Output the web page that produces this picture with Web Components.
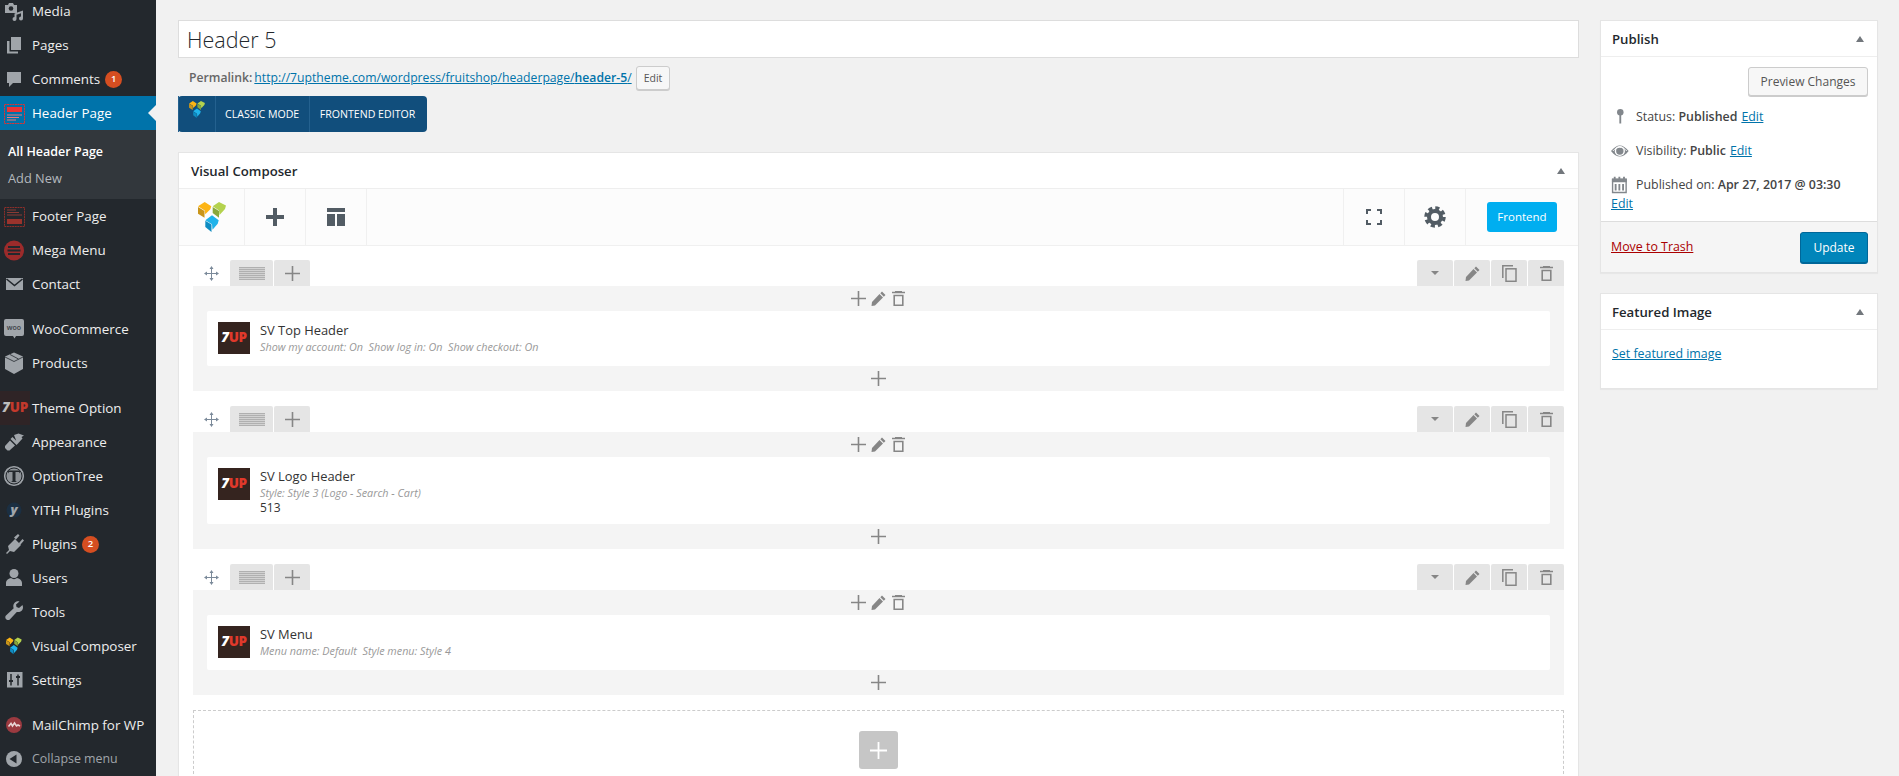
<!DOCTYPE html>
<html><head><meta charset="utf-8">
<style>
html,body{margin:0;padding:0;height:776px;overflow:hidden;background:#f1f1f1;font:13px/1.4 "Open Sans","Noto Sans",sans-serif;color:#444}
</style></head>
<body>
<wp-app>
  <wp-sidebar slot="side">
    <wp-menu-item icon="media" style="margin-top:-6px">Media</wp-menu-item>
    <wp-menu-item icon="pages">Pages</wp-menu-item>
    <wp-menu-item icon="comments" badge="1">Comments</wp-menu-item>
    <wp-menu-item icon="header" current>Header Page</wp-menu-item>
    <wp-submenu>
      <wp-sub-item current>All Header Page</wp-sub-item>
      <wp-sub-item>Add New</wp-sub-item>
    </wp-submenu>
    <wp-menu-item icon="footer">Footer Page</wp-menu-item>
    <wp-menu-item icon="mega">Mega Menu</wp-menu-item>
    <wp-menu-item icon="contact">Contact</wp-menu-item>
    <wp-menu-sep></wp-menu-sep>
    <wp-menu-item icon="woo">WooCommerce</wp-menu-item>
    <wp-menu-item icon="products">Products</wp-menu-item>
    <wp-menu-sep></wp-menu-sep>
    <wp-menu-item icon="seven">Theme Option</wp-menu-item>
    <wp-menu-item icon="brush">Appearance</wp-menu-item>
    <wp-menu-item icon="tree">OptionTree</wp-menu-item>
    <wp-menu-item icon="yith">YITH Plugins</wp-menu-item>
    <wp-menu-item icon="plug" badge="2">Plugins</wp-menu-item>
    <wp-menu-item icon="user">Users</wp-menu-item>
    <wp-menu-item icon="wrench">Tools</wp-menu-item>
    <wp-menu-item icon="vc">Visual Composer</wp-menu-item>
    <wp-menu-item icon="settings">Settings</wp-menu-item>
    <wp-menu-sep></wp-menu-sep>
    <wp-menu-item icon="chimp">MailChimp for WP</wp-menu-item>
    <wp-menu-item icon="collapse" muted>Collapse menu</wp-menu-item>
  </wp-sidebar>

  <wp-editor slot="main">
    <wp-title-field>Header 5</wp-title-field>
    <wp-permalink></wp-permalink>
    <vc-switch></vc-switch>
    <vc-panel>
      <vc-row>
        <vc-element title="SV Top Header" sub="Show my account: On&#160; Show log in: On&#160; Show checkout: On"></vc-element>
      </vc-row>
      <vc-row>
        <vc-element title="SV Logo Header" sub="Style: Style 3 (Logo - Search - Cart)" extra="513"></vc-element>
      </vc-row>
      <vc-row>
        <vc-element title="SV Menu" sub="Menu name: Default&#160; Style menu: Style 4"></vc-element>
      </vc-row>
      <vc-add-zone></vc-add-zone>
    </vc-panel>
  </wp-editor>

  <wp-rail slot="rail">
    <wp-metabox heading="Publish"><wp-publish></wp-publish></wp-metabox>
    <wp-metabox heading="Featured Image"><wp-featured></wp-featured></wp-metabox>
  </wp-rail>
</wp-app>

<script>
const G='#a0a5aa', D='#23282d';
const vcLogo=`<g>
<path fill="#fdb515" d="M0 4.300L6.700 0l6.600 4.300-1 3-5 5-.6-3.800z"/><path fill="#c9951a" d="M0 5l6.500 4v6.700L0 11.700z"/>
<path fill="#b4d24e" d="M14.700 4.300L21 0l7 3.500-1 3.500-5.500 6-.5-4.500z"/><path fill="#8aa83b" d="M14.700 5l6.300 4v6.700L14.700 11z"/>
<path fill="#1fb3ea" d="M7.300 18.300l6.700-5 6.700 5-1 3.500-5.200 6-.5-5.500z"/><path fill="#0e8cc2" d="M7.300 18.800l6.200 3.600V30l-6.200-5z"/></g>`;
const ICONS={
 media:`<path fill="${G}" d="M5 8h3l1-2h4l1 2h3v8H5z"/><circle cx="11" cy="11.500" r="2.300" fill="${D}"/><path fill="${G}" d="M14.500 16.500l8.500-3v8a2 2 0 1 1-2-2v-3.300l-4.500 1.500V22a2 2 0 1 1-2-2z"/>`,
 pages:`<rect x="11" y="6" width="10" height="13" fill="${G}"/><path fill="${G}" d="M7 10h2.500v10.500H18v2H7z"/>`,
 comments:`<path fill="${G}" d="M7 7h14v11h-8l-4 4v-4H7z"/>`,
 header:`<rect x="4.500" y="5.500" width="20" height="19" fill="none" stroke="#d33" stroke-dasharray="2 .6"/><rect x="7" y="8" width="15" height="5" fill="#e33"/><path stroke="#e77" stroke-width="1" d="M7 16h15M7 18.500h12M7 21h9"/>`,
 footer:`<rect x="4.500" y="5.500" width="20" height="19" fill="none" stroke="#8c2f2a" stroke-dasharray="2 .6"/><rect x="7" y="17" width="15" height="5" fill="#9a332c"/><path stroke="#8c3a34" stroke-width="1" d="M7 8h9M7 10.500h12M7 13h15"/>`,
 mega:`<circle cx="14" cy="14.500" r="10" fill="#9c2b2b"/><path stroke="${D}" stroke-width="1.800" d="M8 11h12M7.500 14.500h13M8 18h12"/>`,
 contact:`<rect x="6" y="8" width="17" height="12" fill="${G}"/><path fill="none" stroke="${D}" stroke-width="1.600" d="M6.500 9l8 6.500 8-6.500"/>`,
 woo:`<path fill="${G}" d="M6 4h16a2 2 0 0 1 2 2v13a2 2 0 0 1-2 2h-6l-1.500 2.500L13 21H6a2 2 0 0 1-2-2V6a2 2 0 0 1 2-2z"/><text x="14" y="15" font-size="7" font-weight="600" text-anchor="middle" fill="#3a4046" font-family="Open Sans">woo</text>`,
 products:`<path fill="${G}" d="M14 3.500l9 4v12.500l-9 5-9-5V7.500z"/><path fill="none" stroke="${D}" stroke-width=".8" d="M5 8l9 4.500L23 8M10 5.500l8.500 4.500"/>`,
 brush:`<path fill="${G}" d="M14 7l4.500-1.500L24 7.500l-2.500 1.500 1 1.500-5 5.500zM12.500 9l6 6-2 2-6-6zM10 12.500l5 5-5.500 5H7.500L5 20v-2z"/>`,
 tree:`<circle cx="14" cy="14" r="9.500" fill="#8d9297" stroke="${G}" stroke-width="1.200"/><circle cx="14" cy="14" r="8" fill="none" stroke="${D}" stroke-width="1"/><path fill="${D}" d="M8 8.500h12v3l-1-1.500h-3.500v9l1.500 1h-6l1.500-1v-9H9l-1 1.500z"/>`,
 yith:`<circle cx="14" cy="14" r="7.500" fill="#1b2f42"/><text x="14" y="17.500" font-size="13" font-style="italic" font-weight="800" text-anchor="middle" fill="${G}" font-family="Open Sans">y</text>`,
 plug:`<path fill="${G}" d="M6 23l3-3-1-4 7-7 6 6-7 7-4-1-3 3zM14 7.500l4-3.500 1.500 1.500-3.500 4zM19 13l3.500-4 1.500 1.500-3.500 4z"/>`,
 user:`<circle cx="14" cy="9.500" r="4.500" fill="${G}"/><path fill="${G}" d="M6 22v-3c0-3 3-4.500 5-5 1.500 1.500 4.500 1.500 6 0 2 .5 5 2 5 5v3z"/>`,
 wrench:`<path fill="${G}" d="M22.500 7l-3.500 3-2.500-1-.5-2.500 3.500-3c-3-.8-6 1.500-6.200 4.500 0 1 .1 1.500.4 2.200L6 17.500c-1.500 1.500-.5 5 3 4.500l.8-.6 7-7.500c3 1 6.500-1.500 6.200-5z"/>`,
 vc:`<g transform="translate(6 5.500) scale(.56)">${vcLogo}</g>`,
 settings:`<rect x="7" y="6" width="15.500" height="15.500" fill="${G}"/><path stroke="${D}" stroke-width="1.500" d="M11 8v11.500M18 8.500v11"/><path fill="${D}" d="M9 14h4v2H9zM16 10h4v2h-4z"/>`,
 chimp:`<circle cx="14" cy="14" r="8" fill="#9b3a40"/><path fill="none" stroke="#e8d5d5" stroke-width="1.600" d="M8.500 15.500l2.500-3 1.500 2.500 2-3 2 3 1.500-1 2 1"/>`,
 collapse:`<circle cx="14" cy="14" r="8" fill="${G}"/><path fill="${D}" d="M16.500 9.500v9l-7-4.500z"/>`
};
function tpl(html){const t=document.createElement('template');t.innerHTML=html;return t}
function def(name,html){
  const t=tpl(html);
  customElements.define(name,class extends HTMLElement{
    constructor(){super();this.attachShadow({mode:'open'}).appendChild(t.content.cloneNode(true));}
  });
}
customElements.define('wp-icon',class extends HTMLElement{
  constructor(){super();this.attachShadow({mode:'open'})}
  connectedCallback(){
    const n=this.getAttribute('name');
    if(n==='seven'){
      this.shadowRoot.innerHTML=`<style>:host{display:block;width:30px;height:34px}
      div{width:30px;height:34px;background:#2f2426;display:flex;align-items:center;justify-content:center;font:italic 800 13.500px/1 "Open Sans",sans-serif;color:#bdbdbd;letter-spacing:-.2px}
      b{color:#c4392c;font-style:normal;font-weight:800}</style><div>7<b>UP</b></div>`;return;
    }
    this.shadowRoot.innerHTML=`<style>:host{display:block;width:28px;height:28px}svg{display:block}</style><svg width="28" height="28" viewBox="0 0 28 28">${ICONS[n]}</svg>`;
  }
});
def('wp-app',`<style>:host{display:flex;height:776px;overflow:hidden;align-items:stretch}
 .s{flex:0 0 156px;background:#23282d;overflow:hidden}
 .m{flex:0 0 1401px;margin-left:22px;padding-top:20px;min-width:0}
 .r{flex:0 0 278px;margin-left:21px;padding-top:20px}</style>
 <div class="s"><slot name="side"></slot></div><div class="m"><slot name="main"></slot></div><div class="r"><slot name="rail"></slot></div>`);
def('wp-sidebar',`<style>:host{display:block}</style><slot></slot>`);
def('wp-menu-sep',`<style>:host{display:block;height:11px}</style>`);
customElements.define('wp-menu-item',class extends HTMLElement{
  constructor(){super();this.attachShadow({mode:'open'})}
  connectedCallback(){
    const cur=this.hasAttribute('current'),muted=this.hasAttribute('muted'),b=this.getAttribute('badge'),ic=this.getAttribute('icon');
    this.shadowRoot.innerHTML=`<style>
    :host{display:flex;align-items:center;height:34px;position:relative;background:${cur?'#0073aa':'transparent'};color:${muted?'#a0a5aa':cur?'#fff':'#eee'};font:${muted?'12.400px':'13.400px'}/18px "Open Sans",sans-serif}
    .i{flex:0 0 ${ic==='seven'?'30px':'28px'};margin-right:${ic==='seven'?'2px':'4px'}}
    .b{display:inline-flex;align-items:center;justify-content:center;width:17px;height:17px;border-radius:50%;background:#d54e21;color:#fff;font:600 9.500px/1 "Open Sans",sans-serif;margin-left:5px}
    .a{position:absolute;right:0;top:9px;border:8px solid transparent;border-right-color:#f1f1f1;border-left:0}
    </style><wp-icon class="i" name="${ic}"></wp-icon><span><slot></slot></span>${b?`<span class="b">${b}</span>`:''}${cur?'<i class="a"></i>':''}`;
  }
});
def('wp-submenu',`<style>:host{display:block;background:#32373c;padding:8px 0 7px}</style><slot></slot>`);
customElements.define('wp-sub-item',class extends HTMLElement{
  constructor(){super();this.attachShadow({mode:'open'})}
  connectedCallback(){const c=this.hasAttribute('current');
    this.shadowRoot.innerHTML=`<style>:host{display:block;height:27px;padding-left:8px;font:${c?'600 12.500px':'400 12.800px'}/27px "Open Sans",sans-serif;color:${c?'#fff':'#b4b9be'}}</style><slot></slot>`}
});
def('wp-editor',`<style>:host{display:block}</style><slot></slot>`);
def('wp-title-field',`<style>:host{display:block;height:36px;background:#fff;border:1px solid #ddd;padding:0 8px;font:300 21.500px/38px "Open Sans",sans-serif;color:#23282d}</style><slot></slot>`);
def('wp-permalink',`<style>:host{display:flex;align-items:center;height:24px;margin-top:8px;padding-left:11px;color:#666;font:12.200px/24px "Open Sans",sans-serif}
 b{font-weight:600;margin-right:2px}a{color:#0073aa}a b{margin:0}
 span{display:block;box-sizing:border-box;height:24px;margin-left:4px;padding:0 7px;border:1px solid #ccc;border-radius:3px;background:#f7f7f7;box-shadow:0 1px 0 #ccc;font-size:10.500px;line-height:22px;color:#555}</style>
 <b>Permalink:</b><a href="#">http://7uptheme.com/wordpress/fruitshop/headerpage/<b>header-5</b>/</a><span>Edit</span>`);
def('vc-switch',`<style>:host{display:flex;width:249px;height:36px;margin-top:6px;background:#114e7c;border-radius:4px;color:#fff;font:10.600px/36px "Open Sans",sans-serif}
 .c{padding:0 10px 0 9.500px;border-left:1px solid #24618f;white-space:nowrap}.c:first-child{border:0;padding:0;width:36px;display:flex;align-items:center;justify-content:center}</style>
 <div class="c"><svg width="16" height="17" viewBox="0 0 28 30">${vcLogo}</svg></div><div class="c">CLASSIC MODE</div><div class="c">FRONTEND EDITOR</div>`);
const tri=`<i style="display:block;width:0;height:0;border:4px solid transparent;border-top:0;border-bottom:6px solid #72777c"></i>`;
def('vc-panel',`<style>:host{display:block;box-sizing:border-box;margin-top:20px;height:640px;background:#fff;border:1px solid #e5e5e5;box-shadow:0 1px 1px rgba(0,0,0,.04)}
 .h{display:flex;justify-content:space-between;align-items:center;height:34px;padding:1px 13px 0 12px;border-bottom:1px solid #eee;font:600 13.200px/34px "Open Sans",sans-serif;color:#23282d}
 .t{display:flex;height:56px;background:#fcfcfc;border-bottom:1px solid #f0f0f0;align-items:stretch}
 .c{flex:0 0 61px;box-sizing:border-box;border-right:1px solid #f0f0f0;display:flex;align-items:center;justify-content:center}
 .l{flex:0 0 66px}.sp{flex:1;border-right:1px solid #f0f0f0}
 .f{flex:0 0 112px;display:flex;align-items:center;justify-content:center}
 .f span{display:block;width:70px;height:30px;background:#00aef0;border-radius:3px;color:#fff;font:400 11.500px/30px "Open Sans",sans-serif;text-align:center}
 .b{padding:14px 14px 0 14px;display:flex;flex-direction:column;gap:15px}</style>
 <div class="h"><span>Visual Composer</span>${tri}</div>
 <div class="t"><div class="c l"><svg width="28" height="30" viewBox="0 0 28 30">${vcLogo}</svg></div>
  <div class="c"><svg width="18" height="18" viewBox="0 0 18 18"><path fill="#525c64" d="M7 0h4v7h7v4h-7v7H7v-7H0V7h7z"/></svg></div>
  <div class="c"><svg width="18" height="18" viewBox="0 0 18 18"><path fill="#525c64" d="M0 0h18v4H0zM0 6h8v12H0zM10 6h8v12h-8z"/></svg></div>
  <div class="sp"></div>
  <div class="c"><svg width="16" height="16" viewBox="0 0 16 16" fill="none" stroke="#525c64" stroke-width="2"><path d="M1 5V1h4M11 1h4v4M15 11v4h-4M5 15H1v-4"/></svg></div>
  <div class="c"><svg width="22" height="22" viewBox="0 0 22 22"><circle cx="11" cy="11" r="6" fill="none" stroke="#525c64" stroke-width="4"/><circle cx="11" cy="11" r="9" fill="none" stroke="#525c64" stroke-width="3.500" stroke-dasharray="4.070 3"/></svg></div>
  <div class="f"><span>Frontend</span></div></div>
 <div class="b"><slot></slot></div>`);
const plus=(s=15,c='#868686')=>`<svg width="${s}" height="${s}" viewBox="0 0 15 15"><path fill="${c}" d="M6.700 0h1.600v6.700H15v1.600H8.300V15H6.700V8.300H0V6.700h6.700z"/></svg>`;
const pencil=`<svg width="15" height="15" viewBox="0 0 15 15"><path fill="#868686" d="M11 .5l3.500 3.500-1.700 1.700-3.500-3.500zM8.500 3l3.500 3.500L4 14.500l-3.500.5L1 11z"/></svg>`;
const trash=`<svg width="13" height="15" viewBox="0 0 13 15"><path fill="none" stroke="#868686" stroke-width="1.600" d="M0 1.500h13M2.200 4.500h8.600v9.700H2.200z"/><path fill="#868686" d="M3 0h7v1.500H3z"/></svg>`;
const copy=`<svg width="15" height="17" viewBox="0 0 15 17" fill="none" stroke="#868686" stroke-width="1.500"><path d="M11 .8H.8V13"/><rect x="4" y="3.800" width="10" height="12.500"/></svg>`;
const move=`<svg width="15" height="15" viewBox="0 0 15 15"><path fill="#7b8a9a" d="M7 3h1v4h4V5.500l3 2-3 2V8H8v4h1.500l-2 3-2-3H7V8H3v1.500l-3-2 3-2V7h4V3H5.500l2-3 2 3z"/></svg>`;
def('vc-row',`<style>:host{display:block}
 .top{display:flex;height:26px;gap:1px}
 .tab{box-sizing:border-box;background:#e5e5e5;border-radius:2px 2px 0 0;display:flex;align-items:center;justify-content:center;width:36px}
 .m{background:transparent}.lines{width:43px}
 .lines i{display:block;width:26px;height:13px;background:repeating-linear-gradient(#b0b0b0 0 1px,#d2d2d2 1px 2px)}
 .sp{flex:1}
 .caret{width:0;height:0;border:4px solid transparent;border-bottom:0;border-top:4px solid #868686}
 .body{background:#f4f4f4;padding:0 14px}
 .strip{height:25px;display:flex;align-items:center;justify-content:center;gap:5px;padding-right:1px}
 .strip.a{padding-right:2px;gap:5.500px}
 </style>
 <div class="top"><div class="tab m">${move}</div><div class="tab lines"><i></i></div><div class="tab">${plus()}</div><div class="sp"></div>
 <div class="tab"><i class="caret"></i></div><div class="tab">${pencil}</div><div class="tab">${copy}</div><div class="tab">${trash}</div></div>
 <div class="body"><div class="strip a">${plus()}${pencil}${trash}</div><slot></slot><div class="strip">${plus()}</div></div>`);
customElements.define('vc-element',class extends HTMLElement{
  constructor(){super();this.attachShadow({mode:'open'})}
  connectedCallback(){
    const x=this.getAttribute('extra');
    this.shadowRoot.innerHTML=`<style>:host{display:flex;background:#fff;border-radius:2px;padding:11px 11px 9px;min-height:35px;gap:10px;font-family:"Open Sans",sans-serif}
    .logo{flex:0 0 32px;height:32px;background:#35241f;display:flex;align-items:center;justify-content:center;font:italic 800 13.500px/1 "Open Sans",sans-serif;color:#fff;letter-spacing:-.3px}
    .logo b{font-style:normal;font-weight:800;color:#e0392b}
    .t{font-size:12.900px;line-height:17px;color:#333}.s{font-size:10.800px;line-height:15px;font-style:italic;color:#999}.x{font-size:12px;line-height:15px;color:#333}</style>
    <div class="logo">7<b>UP</b></div><div><div class="t">${this.getAttribute('title')}</div><div class="s">${this.getAttribute('sub')}</div>${x?`<div class="x">${x}</div>`:''}</div>`;
  }
});
def('vc-add-zone',`<style>:host{display:flex;justify-content:center;box-sizing:border-box;height:120px;border:1px dashed #ccc;padding-top:20px}
 div{width:39px;height:38px;margin-right:1px;background:#c6c6c6;border-radius:3px;display:flex;align-items:center;justify-content:center}</style><div>${plus(17,'#fff')}</div>`);
def('wp-rail',`<style>:host{display:flex;flex-direction:column;gap:20px}</style><slot></slot>`);
customElements.define('wp-metabox',class extends HTMLElement{
  constructor(){super();this.attachShadow({mode:'open'})}
  connectedCallback(){
    this.shadowRoot.innerHTML=`<style>:host{display:block;background:#fff;border:1px solid #e5e5e5;box-shadow:0 1px 1px rgba(0,0,0,.04)}
    .h{display:flex;justify-content:space-between;align-items:center;height:34px;padding:1px 13px 0 11px;border-bottom:1px solid #eee;font:600 13.200px/34px "Open Sans",sans-serif;color:#23282d}</style>
    <div class="h"><span>${this.getAttribute('heading')}</span>${tri}</div><slot></slot>`;
  }
});
const pin=`<svg width="28" height="20" viewBox="0 0 28 20"><circle cx="10" cy="5" r="3.500" fill="#82878c"/><path stroke="#82878c" stroke-width="2" d="M10 7v10"/></svg>`;
const eye=`<svg width="28" height="20" viewBox="0 0 28 20"><path fill="#82878c" d="M0 10c3-4 6.500-6 9.500-6s6.500 2 9.500 6c-3 4-6.500 6-9.500 6S3 14 0 10z"/><circle cx="9.500" cy="10" r="5.500" fill="#fff"/><circle cx="9.500" cy="10" r="4" fill="#82878c"/><path d="M2 10c2-2.500 5-4 7.500-4s5.500 1.500 7.500 4" fill="none" stroke="#fff"/></svg>`;
const cal=`<svg width="28" height="20" viewBox="0 0 28 20"><path fill="none" stroke="#82878c" stroke-width="1.500" d="M1.700 4h14.600v14H1.700z"/><path fill="#82878c" d="M1 3h16v4H1zM3 1h2v4H3zM8 1h2v4H8zM13 1h2v4h-2zM4 9h2v7H4zM8 9h2v7H8zM12 9h2v7h-2z"/></svg>`;
def('wp-publish',`<style>:host{display:block;font:12.400px/20px "Open Sans",sans-serif;color:#444}
 a{color:#0073aa}b{font-weight:600}
 .p{display:flex;justify-content:flex-end;padding:10px 9px 0 0}
 .pv{box-sizing:border-box;width:120px;height:29px;border:1px solid #ccc;border-radius:3px;background:#f7f7f7;box-shadow:0 1px 0 #ccc;color:#555;font-size:12px;line-height:27px;text-align:center}
 .rows{padding:4px 9px 0 10px}
 .row{display:flex;align-items:center;height:34px}.row svg{flex:0 0 26px;width:26px;margin-right:-1px}
 .e{padding:0 0 7px 10px;margin-top:-8px}
 .rows a{margin-left:4px}
 .foot{display:flex;justify-content:space-between;align-items:center;height:50px;padding:0 9px 0 10px;background:#f5f5f5;border-top:1px solid #ddd}
 .foot a{color:#a00}
 .u{box-sizing:border-box;width:68px;height:31px;background:#0085ba;border:1px solid #006799;border-radius:3px;box-shadow:0 1px 0 #006799;color:#fff;font-size:12px;font-weight:500;line-height:29px;text-align:center}
 </style>
 <div class="p"><div class="pv">Preview Changes</div></div>
 <div class="rows">
  <div class="row">${pin}<span>Status: <b>Published</b></span><a href="#">Edit</a></div>
  <div class="row">${eye}<span>Visibility: <b>Public</b></span><a href="#">Edit</a></div>
  <div class="row">${cal}<span>Published on: <b>Apr 27, 2017 @ 03:30</b></span></div>
 </div>
 <div class="e"><a href="#">Edit</a></div>
 <div class="foot"><a href="#">Move to Trash</a><div class="u">Update</div></div>`);
def('wp-featured',`<style>:host{display:block;height:58px;padding:14px 11px 0;box-sizing:border-box;font:12.400px/20px "Open Sans",sans-serif}a{color:#0073aa}</style><a href="#">Set featured image</a>`);
</script>
</body></html>
